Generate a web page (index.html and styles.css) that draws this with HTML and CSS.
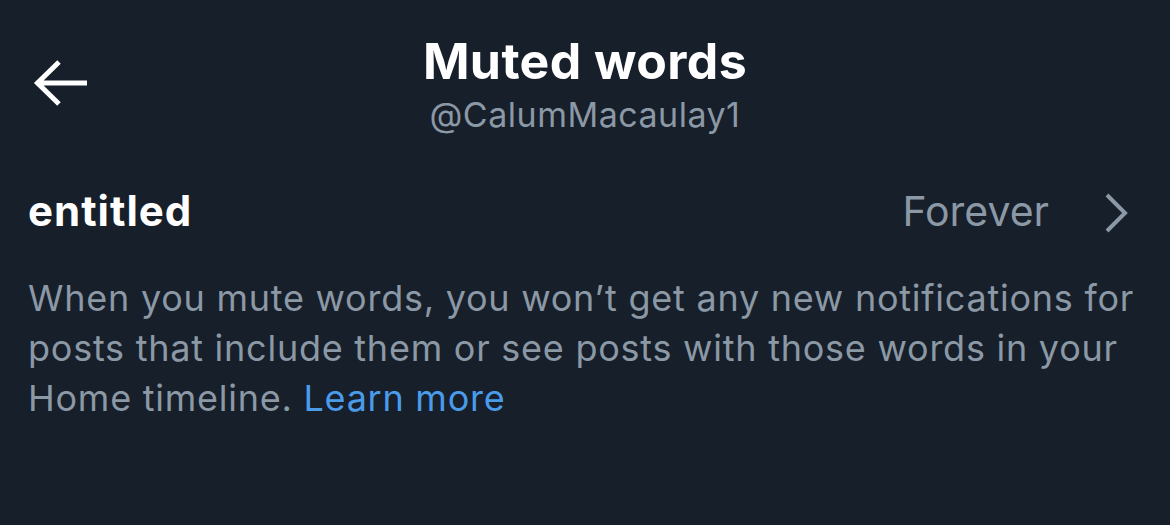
FILE: index.html
```html
<!DOCTYPE html>
<html>
<head>
<meta charset="utf-8">
<link rel="stylesheet" href="styles.css">
</head>
<body>
<div class="screen">
  <header class="header">
    <button class="back" aria-label="Back">
      <svg width="60" height="50" viewBox="0 0 60 50"><path d="M57 25H6M29 4L7.5 25L29 46" fill="none" stroke="#fff" stroke-width="5"/></svg>
    </button>
    <div class="titles">
      <div class="title">Muted words</div>
      <div class="handle">@CalumMacaulay1</div>
    </div>
  </header>
  <div class="row">
    <div class="word">entitled</div>
    <div class="duration">
      <span>Forever</span>
      <svg class="chev" width="24" height="44" viewBox="0 0 24 44"><path d="M3 4l18 18L3 40" fill="none" stroke="#8b98a5" stroke-width="4"/></svg>
    </div>
  </div>
  <p class="desc">When you mute words, you won’t get any new notifications for posts that include them or see posts with those words in your Home timeline. <a class="link">Learn more</a></p>
</div>
</body>
</html>
```
FILE: styles.css
```css
html, body { margin: 0; padding: 0; }
body {
  background: #171f2a;
  font-family: Inter, "Noto Sans", sans-serif;
  width: 1170px;
  height: 525px;
  overflow: hidden;
}
.screen { padding: 0 28px; }
.header {
  position: relative;
  display: flex;
  justify-content: center;
}
.back {
  position: absolute;
  left: 2px;
  top: 58px;
  background: none;
  border: none;
  padding: 0;
  line-height: 0;
}
.titles {
  display: flex;
  flex-direction: column;
  align-items: center;
  gap: 4px;
  padding-top: 31px;
}
.title {
  color: #fff;
  font-weight: 700;
  font-size: 50px;
  line-height: 60px;
  letter-spacing: 0.4px;
}
.handle {
  color: #8b98a5;
  font-size: 34px;
  line-height: 40px;
  letter-spacing: 0.5px;
}
.row {
  display: flex;
  justify-content: space-between;
  align-items: center;
  padding-top: 51px;
}
.word {
  color: #fff;
  font-weight: 700;
  font-size: 42px;
  line-height: 50px;
  letter-spacing: 1px;
}
.duration {
  display: flex;
  align-items: center;
  gap: 55px;
  color: #8b98a5;
  font-size: 41px;
  line-height: 50px;
  padding-right: 14px;
}
.chev { margin-top: 4px; }
.desc {
  margin: 37px 0 0;
  color: #8b98a5;
  font-size: 36px;
  line-height: 50px;
  letter-spacing: 0.75px;
}
.link { color: #4a9bea; }
```
